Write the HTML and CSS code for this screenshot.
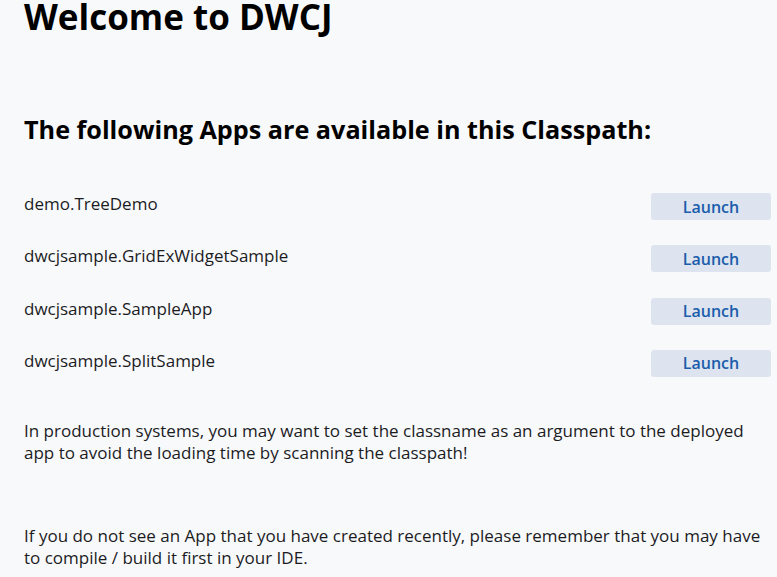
FILE: index.html
```html
<!DOCTYPE html>
<html lang="en">
<head>
<meta charset="utf-8">
<title>Welcome to DWCJ</title>
<link rel="stylesheet" href="styles.css">
</head>
<body>
<main class="page">
  <h1 class="title">Welcome to DWCJ</h1>
  <h2 class="subtitle">The following Apps are available in this Classpath:</h2>
  <ul class="apps">
    <li class="app"><span class="app-name">demo.TreeDemo</span><button class="launch">Launch</button></li>
    <li class="app"><span class="app-name">dwcjsample.GridExWidgetSample</span><button class="launch">Launch</button></li>
    <li class="app"><span class="app-name">dwcjsample.SampleApp</span><button class="launch">Launch</button></li>
    <li class="app"><span class="app-name">dwcjsample.SplitSample</span><button class="launch">Launch</button></li>
  </ul>
  <p class="note">In production systems, you may want to set the classname as an argument to the deployed app to avoid the loading time by scanning the classpath!</p>
  <p class="note note-last">If you do not see an App that you have created recently, please remember that you may have to compile / build it first in your IDE.</p>
</main>
</body>
</html>
```
FILE: styles.css
```css
html, body {
  margin: 0;
  padding: 0;
  background: #f8f9fb;
}
body {
  font-family: "Open Sans", "Noto Sans", sans-serif;
  color: #1c1c1f;
}
.page {
  padding: 0 6px 0 24px;
}
.title {
  margin: 0;
  padding-top: 1px;
  font-size: 35px;
  line-height: 31px;
  font-weight: 700;
  color: #000;
}
.subtitle {
  margin: 82px 0 0;
  font-size: 25.2px;
  line-height: 30px;
  font-weight: 700;
  color: #000;
}
.apps {
  list-style: none;
  margin: 49px 0 0;
  padding: 0;
  display: flex;
  flex-direction: column;
  gap: 25.33px;
}
.app {
  display: flex;
  justify-content: space-between;
  align-items: flex-start;
  height: 27px;
}
.app-name {
  font-size: 17px;
  line-height: 22px;
}
.launch {
  width: 120px;
  height: 27px;
  border: none;
  border-radius: 3px;
  background: #dde4ef;
  color: #1b5dab;
  font-family: inherit;
  font-size: 16px;
  font-weight: 600;
  padding: 0;
}
.note {
  margin: 43px 0 0;
  font-size: 17px;
  line-height: 22px;
}
.note-last {
  margin-top: 61px;
}
```
